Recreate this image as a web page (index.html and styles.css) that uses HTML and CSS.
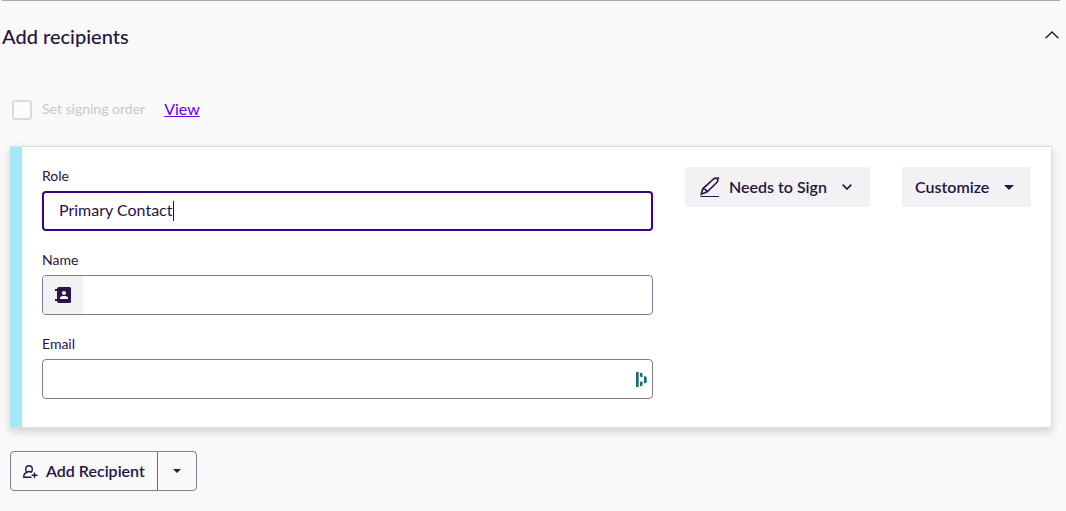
FILE: index.html
```html
<!DOCTYPE html>
<html lang="en">
<head>
<meta charset="utf-8">
<meta name="viewport" content="width=device-width, initial-scale=1">
<title>Add recipients</title>
<link rel="stylesheet" href="styles.css">
</head>
<body>
<section class="section">
  <header class="section-header">
    <h2 class="section-title">Add recipients</h2>
    <button class="collapse" type="button" aria-label="Collapse">
      <svg width="14" height="8" viewBox="0 0 14 8" fill="none" stroke="#1b1b22" stroke-width="1.3"><path d="M.6 7.3 7 1l6.4 6.3"/></svg>
    </button>
  </header>
  <div class="order">
    <input class="order-check" type="checkbox" id="order" disabled>
    <label class="order-label" for="order">Set signing order</label>
    <a class="order-link" href="#">View</a>
  </div>
  <form class="card">
    <div class="fields">
      <div class="field">
        <label class="label" for="role">Role</label>
        <div class="box box-focus">
          <input class="input input-role" id="role" type="text" value="Primary Contact">
          <span class="caret"></span>
        </div>
      </div>
      <div class="field">
        <label class="label" for="name">Name</label>
        <div class="box">
          <button class="book" type="button" aria-label="Contacts">
            <svg width="18" height="16" viewBox="0 0 18 16"><path fill="#2a1449" d="M5 0h10.500A1.500 1.500 0 0 1 17 1.500v13a1.500 1.500 0 0 1-1.500 1.500H5a2 2 0 0 1-2-2H1v-2h2V4H1V2h2a2 2 0 0 1 2-2z"/><circle cx="10" cy="6" r="2" fill="#fff"/><path fill="#fff" d="M6 12v-1c0-1.400 2-2 4-2s4 .6 4 2v1z"/></svg>
          </button>
          <input class="input input-fill" id="name" type="text">
        </div>
      </div>
      <div class="field">
        <label class="label" for="email">Email</label>
        <div class="box">
          <input class="input input-fill" id="email" type="email">
          <svg class="fill-mark" width="11" height="15" viewBox="0 0 11 15" fill="#1d6b77"><path d="M0 0h2.700v15H0zM4 1h2.500v4.500L4 4.500zM4 10l2.500-1v4.500L4 14.500zM8 4l2.700 1v5.500L8 11.500z"/></svg>
        </div>
      </div>
    </div>
    <div class="actions">
      <button class="action action-sign" type="button">
        <svg width="20" height="20" viewBox="0 0 20 20" fill="none" stroke="#2a1449" stroke-width="1.600"><path d="M.5 19.500H19" stroke-width="1"/><path d="M1.200 17.200 2.800 11.800 13.500 2Q15.800.3 17.200 1.700 18.600 3.300 17 5.300L7.200 14.800ZM3 11.800Q6 12 7 14.800M16.800 2 19 .5"/></svg>
        <span>Needs to Sign</span>
        <svg class="chevron" width="10" height="6" viewBox="0 0 10 6" fill="none" stroke="#2a1449" stroke-width="1.700"><path d="m.7.7 4.300 4.300L9.300.7"/></svg>
      </button>
      <button class="action action-custom" type="button">
        <span>Customize</span>
        <svg width="10" height="5" viewBox="0 0 10 5" fill="#2a1449"><path d="M0 0h10L5 5z"/></svg>
      </button>
    </div>
  </form>
  <div class="add">
    <button class="add-main" type="button">
      <svg width="15" height="13" viewBox="0 0 15 13" fill="none" stroke="#2a1449" stroke-width="1.400"><path d="M8.500 12.300H.8V11q0-2.600 2.800-3.400Q2.700 6.500 2.700 4.200 2.800.7 6 .7T9.300 4.200Q9.300 6.500 7.800 7.500M3.600 7.600Q6 5.600 8 7.500M11.500 7.500v5.500M8.700 10.200h5.800"/></svg>
      <span>Add Recipient</span>
    </button>
    <button class="add-more" type="button" aria-label="More options">
      <svg width="8" height="4" viewBox="0 0 8 4" fill="#2a1449"><path d="M0 0h8L4 4z"/></svg>
    </button>
  </div>
</section>
</body>
</html>
```
FILE: styles.css
```css
* { box-sizing: border-box; }
body {
  margin: 0;
  background: #f9f9f9;
  color: #26143f;
  font-family: Lato, "Liberation Sans", sans-serif;
}
button, input { font: inherit; color: inherit; }
button { background: none; border: 0; padding: 0; cursor: pointer; }
svg { display: block; flex: none; }
.section { margin: 0 6px 0 2px; border-top: 1px solid #a9a9a9; }
.section-header { display: flex; align-items: center; justify-content: space-between; height: 70px; }
.section-title { margin: 0; font-size: 20px; font-weight: 500; line-height: 24px; }
.collapse { padding: 4px 1px 6px; }
.order { display: flex; align-items: center; height: 24px; margin: 27px 10px 0; }
.order-check {
  appearance: none;
  width: 20px; height: 20px;
  margin: 0 10px 0 0;
  border: 2px solid #dadae0;
  border-radius: 3px;
  background: #fcfcfc;
}
.order-label { padding-bottom: 2px; font-size: 14px; line-height: 20px; color: #c9c7cf; }
.order-link { margin-left: 19px; padding-bottom: 2px; font-size: 16px; line-height: 20px; color: #6500ee; }
.card {
  display: flex;
  gap: 32px;
  margin: 24px 8px 0;
  padding: 20px 20px 28px;
  background: #fff;
  border: 1px solid #dcdcdc;
  border-left: 12px solid #a4e9fb;
  border-radius: 2px;
  box-shadow: 0 4px 10px rgba(0, 0, 0, .16);
}
.fields { flex: 1; display: flex; flex-direction: column; gap: 20px; min-width: 0; }
.field { display: flex; flex-direction: column; gap: 6px; }
.label { font-size: 14px; line-height: 18px; }
.box {
  display: flex;
  align-items: center;
  height: 40px;
  border: 1px solid #857a96;
  border-radius: 4px;
  background: #fff;
  overflow: hidden;
}
.box-focus { border: 2px solid #3c008f; padding-left: 15px; }
.input { border: 0; outline: 0; padding: 0; background: none; font-size: 16px; line-height: 24px; min-width: 0; }
.input-role { field-sizing: content; padding-bottom: 2px; }
.input-fill { flex: 1; padding: 0 16px; }
.caret { width: 1px; height: 20px; background: #26143f; }
.book { display: flex; align-items: center; justify-content: center; align-self: stretch; width: 40px; background: #f2f2f5; }
.fill-mark { margin-right: 5px; }
.actions { display: flex; align-items: flex-start; gap: 32px; }
.action {
  display: flex;
  align-items: center;
  height: 40px;
  border-radius: 3px;
  background: #f2f2f5;
  font-size: 16px;
  font-weight: 600;
  white-space: nowrap;
}
.action span, .add-main span { padding-bottom: 2px; }
.action-sign { width: 185px; padding: 0 18px 0 15px; gap: 9px; }
.chevron { margin-left: auto; }
.action-custom { width: 129px; padding: 0 17px 0 13px; justify-content: space-between; }
.add {
  display: inline-flex;
  height: 40px;
  margin: 23px 8px;
  border: 1px solid #857a96;
  border-radius: 4px;
  font-size: 16px;
  font-weight: 600;
}
.add-main { display: flex; align-items: center; gap: 8px; width: 147px; padding-left: 12px; white-space: nowrap; border-right: 1px solid #6f6385; }
.add-more { display: flex; align-items: center; justify-content: center; width: 38px; }
```
